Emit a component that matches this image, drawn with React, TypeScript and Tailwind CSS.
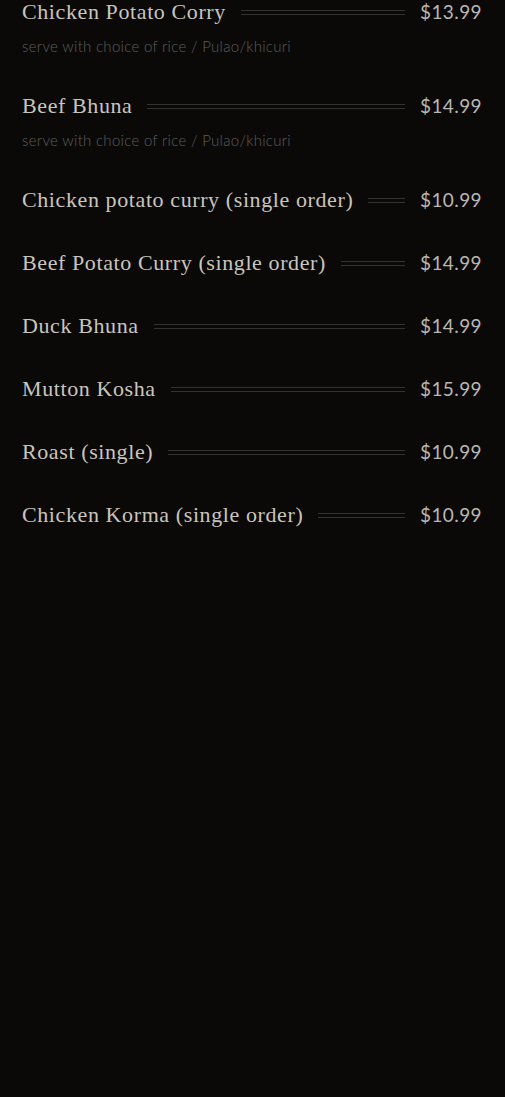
import React from "react";

const items = [
  { name: "Chicken Potato Corry", price: "$13.99", desc: "serve with choice of rice / Pulao/khicuri" },
  { name: "Beef Bhuna", price: "$14.99", desc: "serve with choice of rice / Pulao/khicuri" },
  { name: "Chicken potato curry (single order)", price: "$10.99" },
  { name: "Beef Potato Curry (single order)", price: "$14.99" },
  { name: "Duck Bhuna", price: "$14.99" },
  { name: "Mutton Kosha", price: "$15.99" },
  { name: "Roast (single)", price: "$10.99" },
  { name: "Chicken Korma (single order)", price: "$10.99" },
];

function MenuItem({ name, price, desc }: { name: string; price: string; desc?: string }) {
  return (
    <div className="flex flex-col">
      <div className="flex items-center h-[30px]">
        <span className="text-[22px] leading-[30px] text-[#c9c5bd] whitespace-nowrap font-['Liberation_Serif',serif] tracking-[0.6px]">
          {name}
        </span>
        <div className="flex-1 mx-[15px] h-[5px] border-t border-b border-[#333231]" />
        <span className="text-[19px] leading-[30px] text-[#b9b7b3] font-['Lato',sans-serif] tracking-[0.4px]">
          {price}
        </span>
      </div>
      {desc && (
        <p className="mt-[9px] mb-[1px] text-[15px] leading-[21px] text-[#5e5d5b] font-light font-['Lato',sans-serif] tracking-[0.3px]">
          {desc}
        </p>
      )}
    </div>
  );
}

export default function App() {
  return (
    <div className="min-h-[1097px] bg-[#0a0908] overflow-hidden">
      <div className="-mt-[3px] pl-[22px] pr-[23px] flex flex-col gap-[33px]">
        {items.map((item) => (
          <MenuItem key={item.name} {...item} />
        ))}
      </div>
    </div>
  );
}
